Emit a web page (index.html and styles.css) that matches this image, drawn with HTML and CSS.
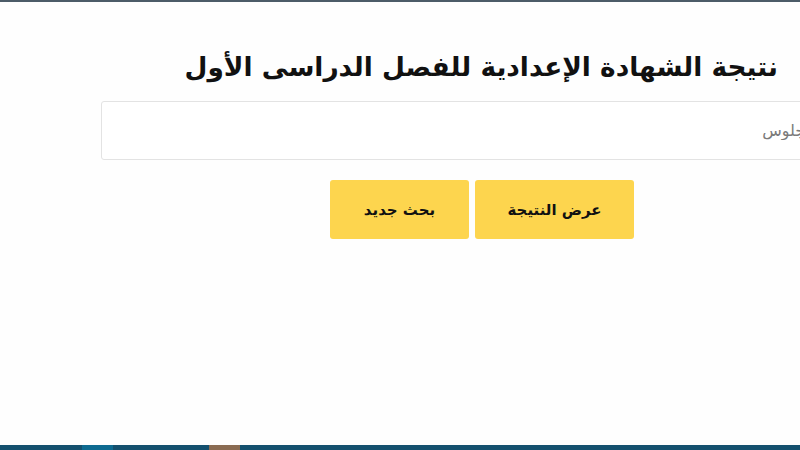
FILE: index.html
```html
<!DOCTYPE html>
<html lang="ar" dir="rtl">
<head>
    <meta charset="UTF-8">
    <meta name="viewport" content="width=device-width, initial-scale=1.0">
    <title>نتيجة الشهادة الإعدادية</title>
    <link rel="stylesheet" href="styles.css">
</head>
<body>
    <div class="top-line"></div>

    <!-- Result Search -->
    <div class="page">
        <div class="result-box">
            <h1 class="title">نتيجة الشهادة الإعدادية للفصل الدراسى الأول</h1>
            <input type="text" class="seat-input" placeholder="رقم الجلوس">
            <div class="actions">
                <button class="btn">عرض النتيجة</button>
                <button class="btn">بحث جديد</button>
            </div>
        </div>
    </div>

    <!-- Footer strip -->
    <div class="bottom-line">
        <span class="seg seg-a"></span>
        <span class="seg seg-b"></span>
        <span class="seg seg-c"></span>
        <span class="seg seg-d"></span>
        <span class="seg seg-e"></span>
    </div>
</body>
</html>
```

FILE: styles.css
```css
html, body {
    margin: 0;
    padding: 0;
    height: 100%;
    overflow: hidden;
}
body {
    font-family: "DejaVu Sans", "Noto Sans", sans-serif;
    background-color: #fefefe;
    display: flex;
    flex-direction: column;
    width: 800px;
}
.top-line {
    height: 2px;
    background-color: #4c5c68;
}
.page {
    flex: 1;
    direction: ltr;
}
.result-box {
    direction: rtl;
    width: 762px;
    margin-left: 101px;
}
.title {
    margin: 38px 85px 0 0;
    font-size: 26.4px;
    font-weight: bold;
    color: #111;
    line-height: 54px;
}
.seat-input {
    display: block;
    box-sizing: border-box;
    width: 100%;
    height: 59px;
    margin-top: 7px;
    padding: 0 16px;
    border: 1px solid #e3e3e3;
    border-radius: 3px;
    background-color: #fff;
    font-family: inherit;
    font-size: 16px;
}
.seat-input::placeholder {
    color: #7a7a7a;
}
.actions {
    display: flex;
    justify-content: center;
    gap: 6px;
    margin-top: 20px;
}
.btn {
    height: 59px;
    padding: 0;
    border: none;
    border-radius: 3px;
    background-color: #fdd54e;
    color: #111;
    font-family: inherit;
    font-size: 15px;
    font-weight: bold;
    cursor: pointer;
}
.btn:first-child {
    width: 159px;
}
.btn:last-child {
    width: 139px;
}
.bottom-line {
    direction: ltr;
    display: flex;
    height: 5px;
    background-color: #14506e;
}
.seg {
    height: 100%;
}
.seg-a { width: 82px; }
.seg-b { width: 31px; background-color: #0e6a90; }
.seg-c { width: 96px; }
.seg-d { width: 31px; background-color: #8a6b52; }
```
